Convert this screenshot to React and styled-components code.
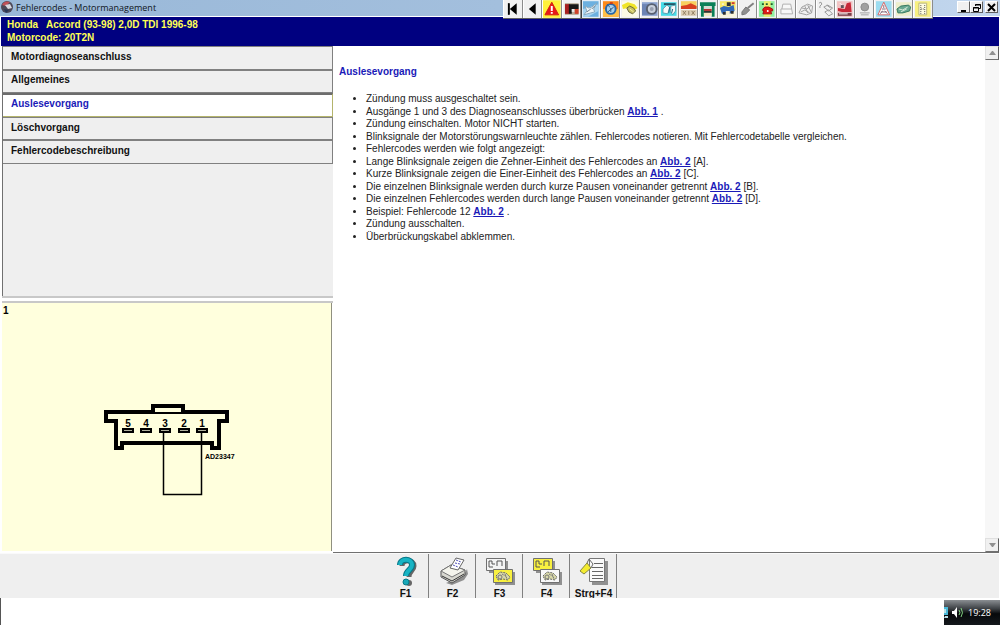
import { useState } from "react";
import styled, { createGlobalStyle } from "styled-components";

const GlobalStyle = createGlobalStyle`
	* {
		box-sizing: border-box;
	}
	body {
		margin: 0;
		background: #fff;
		font-family: "Liberation Sans", Arial, sans-serif;
		font-size: 10px;
	}
	button {
		font: inherit;
		padding: 0;
		cursor: pointer;
	}
	svg {
		display: block;
	}
`;

const Window = styled.div`
	height: 100vh;
	display: flex;
	flex-direction: column;
	background: #fff;
`;

const TitleBar = styled.header`
	height: 16px;
	display: flex;
	align-items: flex-start;
	position: relative;
	z-index: 1;
	background: linear-gradient(to right, #99b8d8, #a3bfdd 50%, #c3d7ee);
`;

const Title = styled.div`
	flex: 1;
	height: 15px;
	display: flex;
	align-items: center;
	gap: 2px;
	padding-left: 1px;
	font-family: "Open Sans", sans-serif;
	font-size: 9px;
	line-height: 15px;
	color: #10151c;
`;

const Toolbar = styled.div`
	flex: 0 0 43%;
	height: 19px;
	display: grid;
	grid-template-columns: repeat(22, 1fr);
	background: #808080;
	border-bottom: 1px solid #606060;
`;

const ToolButton = styled.button`
	min-width: 0;
	display: flex;
	align-items: center;
	justify-content: center;
	background: ${(props) => (props.$active ? "#e4eef6" : "#f1f1f1")};
	border: 0;
	border-left: 1px solid ${(props) => (props.$active ? "#404040" : "#fff")};
	border-right: 1px solid #8c8c8c;
`;

const WindowButtons = styled.div`
	flex: 0 0 67px;
	display: flex;
	justify-content: flex-end;
	padding: 1px 2px 0 0;
`;

const WindowButton = styled.button`
	width: 13px;
	height: 12px;
	margin-left: ${(props) => (props.$gap ? 2 : 0)}px;
	display: flex;
	align-items: center;
	justify-content: center;
	background: #f0f0f0;
	border: 1px solid #fff;
	border-right-color: #606060;
	border-bottom-color: #606060;
`;

const CarInfo = styled.div`
	height: 29px;
	margin: 1px 1px 0;
	padding: 1px 6px;
	background: #000080;
	color: #ffff55;
	font-weight: bold;
	line-height: 13px;
	white-space: pre;
`;

const Body = styled.main`
	flex: 1;
	min-height: 0;
	display: flex;
`;

const Side = styled.div`
	flex: 0 0 333px;
	display: flex;
	flex-direction: column;
`;

const Nav = styled.nav`
	flex: 1 1 6px;
	margin-left: 2px;
	background: #efefef;
	border-left: 1px solid #707070;
`;

const NavList = styled.div`
	height: 118px;
	display: grid;
	grid-template-rows: repeat(5, 1fr);
`;

const NavItem = styled.button`
	padding: 0 8px 2px;
	text-align: left;
	font-weight: bold;
	line-height: 16px;
	color: ${(props) => (props.$active ? "#1a1ab8" : "#111")};
	background: ${(props) => (props.$active ? "#fff" : "#efefef")};
	border: 1px solid #808080;
	border-left-width: 0;
	border-top-width: ${(props) => (props.$active ? 2 : 1)}px;
	${(props) => props.$active && "border-color: #6c6c6c #b4b46c #b4b46c;"}
`;

const Splitter = styled.div`
	height: 7px;
	margin-left: 2px;
	border: solid #c8c8c8;
	border-width: 2px 0;
	background: #fff;
`;

const Figure = styled.figure`
	flex: 1 1 4px;
	margin: 0 1px 2px 2px;
	padding: 2px 1px;
	background: #ffffdd;
	border-right: 1px solid #909080;
`;

const FigureNumber = styled.figcaption`
	font-weight: bold;
	line-height: 12px;
`;

const Drawing = styled.div`
	display: flex;
	justify-content: center;
	padding-top: 86px;
`;

const Article = styled.article`
	flex: 1;
	padding: 20px 6px;
	border-bottom: 1px solid #707070;
	color: #222;
`;

const Heading = styled.h1`
	margin: 0 0 15px;
	font-size: 10px;
	line-height: 12px;
	color: #1a1ab8;
`;

const Steps = styled.ul`
	height: 150px;
	margin: 0;
	padding-left: 27px;
	display: grid;
	grid-template-rows: repeat(12, 1fr);
	line-height: 12px;
`;

const FigLink = styled.a`
	color: #1a1ab8;
	font-weight: bold;
`;

const ScrollTrack = styled.div`
	flex: 0 0 14px;
	display: flex;
	flex-direction: column;
	justify-content: space-between;
	margin-right: 1px;
	background: #f7f7f7;
	border-bottom: 1px solid #707070;
`;

const ScrollButton = styled.button`
	height: 14px;
	display: flex;
	align-items: center;
	justify-content: center;
	background: #f0f0f0;
	border: 1px solid #e0e0e0;
	border-right-color: #606060;
	border-bottom-color: #707070;
`;

const Footer = styled.footer`
	height: 45px;
	display: flex;
	justify-content: center;
	margin-right: 1px;
	overflow: hidden;
	background: #efefef;
	border-top: 1px solid #fafafa;
`;

const KeyButton = styled.button`
	width: 47px;
	height: 50px;
	display: flex;
	flex-direction: column;
	align-items: center;
	gap: 2px;
	padding: 2px 0 0 1px;
	background: #efefef;
	border: 0;
	border-right: 1px solid #808080;
	font-weight: bold;
	line-height: 12px;
	color: #111;
`;

const Desktop = styled.div`
	height: 27px;
	display: flex;
	justify-content: flex-end;
	align-items: flex-end;
	border-left: 1px solid #555;
`;

const Tray = styled.div`
	width: 56px;
	height: 25px;
	display: flex;
	align-items: center;
	gap: 4px;
	background: linear-gradient(#8a8e92, #3c4044 35%, #07090b 55%, #14181c);
	color: #fff;
	font-family: "Open Sans", sans-serif;
	font-size: 9px;
`;

const TOOLS = [
	{
		name: "Anfang",
		icon: (
			<>
				<path d="M4 3h2v12H4z" />
				<path d="M13 3v12L6 9z" />
			</>
		),
	},
	{ name: "Zurück", icon: <path d="M12 3v12L5 9z" /> },
	{
		name: "Warnung",
		icon: (
			<>
				<path fill="#fff03a" d="M0 0h18v18H0z" />
				<path fill="#e81818" stroke="#d02010" d="M9 2l7 13H2z" />
				<path fill="#fff" d="M8 6h2v5H8zM8 12h2v2H8z" />
			</>
		),
	},
	{
		name: "Fahrzeug",
		icon: (
			<>
				<path fill="#b8ac98" d="M2 3h14v12H2z" />
				<path fill="#a82020" d="M2 4h5v10H2z" />
				<path fill="#161616" d="M6 4h10v5H9v5H6z" />
				<path fill="#e8e8e8" d="M9 9h3v3H9z" />
				<path fill="#d04028" d="M12 9h4v5h-4z" />
			</>
		),
	},
	{
		name: "Motormanagement",
		icon: (
			<>
				<path fill="#6cb0e0" d="M1 1h16v16H1z" />
				<path fill="#a8d4f0" d="M1 9l16-5v7L6 17H1z" />
				<path fill="#eef4f8" stroke="#88a8bc" d="M3 6l4 2 3-1 5-4-3 6 1 3-4 1-7 2 3-4z" />
				<path fill="none" stroke="#6c8494" d="M5 12l4-3M10 9l3-3" />
			</>
		),
	},
	{
		name: "Zahnriemen",
		icon: (
			<>
				<path fill="#ff8a18" d="M1 1h16v16H1z" />
				<path fill="#ffc048" d="M1 9h16v8H1z" />
				<circle cx="9" cy="9" r="5" fill="#a8d0ec" stroke="#2868a8" strokeWidth="2" />
				<path fill="none" stroke="#30587c" d="M5 4l3 3M6 12l6-5M9 8v4" />
				<path fill="#c83c18" d="M8 2h3v2H8z" />
			</>
		),
	},
	{
		name: "Wartung",
		icon: (
			<>
				<path fill="#fdfbe4" d="M1 1h16v16H1z" />
				<path fill="#f0e428" d="M1 5l6-3 7 2 3 4-3 2-7-2-5 1z" />
				<path fill="#c8c060" stroke="#68683c" d="M6 8l3-2 4 2 2 3-3 3-4-2z" />
				<path fill="none" stroke="#f8f4a0" d="M9 9l4 3" />
			</>
		),
	},
	{
		name: "Reifen",
		icon: (
			<>
				<path fill="#8ca4d0" d="M1 2h16v14H1z" />
				<path fill="#6c84b4" d="M1 4h7v11H1z" />
				<circle cx="11" cy="9" r="5" fill="#c8d0dc" stroke="#586070" strokeWidth="2" />
				<circle cx="11" cy="9" r="2" fill="#98a0b0" />
			</>
		),
	},
	{
		name: "Kühlung",
		icon: (
			<>
				<path fill="#48dce8" d="M1 2h16v14H1z" />
				<path fill="#205868" d="M4 3h12v2H4z" />
				<path fill="#f8f8f8" stroke="#58a0b0" d="M3 9l4-4 3 2-2 7-5-1zM11 6l5-1v6l-3 4-2-3z" />
				<path fill="none" stroke="#206880" d="M10 7l-1 6M13 9l-1 4" />
			</>
		),
	},
	{
		name: "Karosserie",
		icon: (
			<>
				<path fill="#f8d060" d="M1 1h16v7H1z" />
				<path fill="#d84020" d="M1 6l6-1 4-2 6 3v3H1z" />
				<path fill="#dccdb4" d="M1 10h16v6H1z" />
				<path fill="none" stroke="#907c60" d="M3 11l3 4M6 11l-3 4M9 11v4M12 11l3 4M15 11l-3 4" />
			</>
		),
	},
	{
		name: "Hebebühne",
		icon: (
			<>
				<path fill="#0c8058" d="M1 2h16v4H1zM2 6h3v11H2zM13 6h3v11h-3z" />
				<path fill="#d4dcd4" d="M5 6h8v3H5z" />
				<path fill="#b83030" d="M5 9h8v2H5z" />
				<path fill="#303830" d="M5 11h8v2H5z" />
				<path fill="#f4e8c0" d="M5 13h8v3H5z" />
			</>
		),
	},
	{
		name: "Werkstatt",
		icon: (
			<>
				<path fill="#f8e868" d="M1 1h16v9H1z" />
				<path fill="#fbf6dc" d="M1 10h16v7H1z" />
				<path fill="#3068b8" d="M1 8l4-2 5 1 5-2 1 6-5 3H3z" />
				<path fill="#303030" d="M8 2h4v4H8zM4 12h3v3H4zM12 11h3v3h-3z" />
				<path fill="#f8f0d0" d="M7 11h4v4H7zM3 3h2v2H3z" />
				<path fill="#d03830" d="M13 2h3v2h-3z" />
			</>
		),
	},
	{
		name: "Schlüssel",
		icon: (
			<>
				<path fill="none" stroke="#808080" strokeWidth="2" d="M9 8l6-5" />
				<path fill="#909090" stroke="#747474" d="M3 12l4-5 4 3-4 4-4 1z" />
			</>
		),
	},
	{
		name: "Telefon",
		icon: (
			<>
				<path fill="#90f0a0" d="M1 1h16v16H1z" />
				<path fill="#f0f070" d="M6 1h7v16H6z" />
				<path fill="#205828" d="M4 3h2v2H4zM8 3h2v2H8zM13 3h2v2h-2z" />
				<path fill="#e01818" stroke="#a01010" d="M5 9l2-2h4l4 2v2h-2l1 3H5l1-3H5z" />
				<circle cx="10" cy="11" r="1" fill="#fff" />
			</>
		),
	},
	{
		name: "Batterie",
		icon: <path fill="#f8f8f8" stroke="#b0b0b0" d="M5 4h8l1 5 1 5H3V9l1 0zM4 9h10" />,
	},
	{
		name: "Achsvermessung",
		icon: (
			<path
				fill="none"
				stroke="#a0a0a0"
				d="M2 13l3-6 6-3 5 2-1 7-5 2zM5 8l5 1 4-3M4 12l4-2 5 3M8 6l3 7M11 5l4 8"
			/>
		),
	},
	{
		name: "Fehlersuche",
		icon: (
			<path
				fill="none"
				stroke="#989898"
				d="M2 3l2-1 1 2-2 2v2M7 7l4-2 5 3-4 3zM8 12l4-2 4 4-4 2zM10 5l4 3"
			/>
		),
	},
	{
		name: "Airbag",
		icon: (
			<>
				<path fill="#f0c4c4" d="M1 1h16v16H1z" />
				<path fill="#c82838" d="M11 3l4-1 1 10H6l-4-1V8l7 1z" />
				<path fill="#784048" d="M2 13h14v3H2z" />
				<path fill="none" stroke="#fff" d="M4 3l4 4M3 14h9" />
				<path fill="#605058" d="M5 5h3v3H5z" />
			</>
		),
	},
	{
		name: "Kupplung",
		icon: (
			<>
				<circle cx="9" cy="7" r="4" fill="#a0a0a0" stroke="#8c8c8c" />
				<path fill="none" stroke="#a0a0a0" d="M4 13h10M5 15h8" />
			</>
		),
	},
	{
		name: "Bremsen",
		icon: (
			<>
				<path fill="#9cdcf0" d="M1 1h16v16H1z" />
				<path fill="#fff" stroke="#d86868" d="M9 2l6 13H3z" />
				<path fill="none" stroke="#806878" d="M9 5v3M7 9h4M6 12h6M8 11l-3 3M10 11l3 3" />
			</>
		),
	},
	{
		name: "Elektrik",
		icon: (
			<>
				<path fill="#eeeecc" d="M1 2h16v14H1z" />
				<path fill="#68a890" stroke="#387860" d="M2 9l4-3 8-1 2 2-1 4-7 2H3z" />
				<path fill="none" stroke="#d8ead8" d="M4 9l4 1 5-3M6 12l6-3" />
			</>
		),
	},
	{
		name: "Schaltplan",
		icon: (
			<>
				<path fill="#f8f080" d="M1 1h16v16H1z" />
				<path fill="#fffde0" stroke="#b8b480" d="M5 3h8v12H5z" />
				<path fill="none" stroke="#505050" strokeDasharray="1 1" d="M7 5v9M11 5v9M7 9h4" />
			</>
		),
	},
];

const SECTIONS = [
	"Motordiagnoseanschluss",
	"Allgemeines",
	"Auslesevorgang",
	"Löschvorgang",
	"Fehlercodebeschreibung",
];

const STEPS = [
	["Zündung muss ausgeschaltet sein."],
	["Ausgänge 1 und 3 des Diagnoseanschlusses überbrücken ", "Abb. 1", " ."],
	["Zündung einschalten. Motor NICHT starten."],
	[
		"Blinksignale der Motorstörungswarnleuchte zählen. Fehlercodes notieren. Mit Fehlercodetabelle vergleichen.",
	],
	["Fehlercodes werden wie folgt angezeigt:"],
	["Lange Blinksignale zeigen die Zehner-Einheit des Fehlercodes an ", "Abb. 2", " [A]."],
	["Kurze Blinksignale zeigen die Einer-Einheit des Fehlercodes an ", "Abb. 2", " [C]."],
	["Die einzelnen Blinksignale werden durch kurze Pausen voneinander getrennt ", "Abb. 2", " [B]."],
	["Die einzelnen Fehlercodes werden durch lange Pausen voneinander getrennt ", "Abb. 2", " [D]."],
	["Beispiel: Fehlercode 12 ", "Abb. 2", " ."],
	["Zündung ausschalten."],
	["Überbrückungskabel abklemmen."],
];

// two overlapping cards, used for F3 and F4
const Cards = ({ back, front }) => (
	<>
		<path fill="#909090" d="M4 5h19v12H4zM10 16h20v13H10z" />
		<path fill={back} stroke="#707070" d="M1.5 2.5h19v12h-19z" />
		<path fill="none" stroke="#555" d="M4 11V5h3v3h3M12 10V5h5v5M4 11h4" />
		<path fill={front} stroke="#707070" d="M8.5 13.5h19v13h-19z" />
		<path
			fill="#d8d8a8"
			stroke="#666"
			strokeDasharray="2 1"
			d="M11 20l4-4 6 1 4 4-2 3-5-1-5 1z"
		/>
		<circle cx="15" cy="21" r="2" fill="none" stroke="#777" />
		<path fill="none" stroke="#777" strokeDasharray="2 1" d="M17 18l5 3M20 18l2 5" />
	</>
);

const KEYS = [
	{
		label: "F1",
		icon: (
			<>
				<path fill="none" stroke="#666" strokeWidth="5" d="M11 10c0-7 12-7 12 0 0 5-5 5-5 11" />
				<circle cx="18" cy="27" r="3" fill="#666" />
				<path fill="none" stroke="#087888" strokeWidth="6" d="M9 9c0-7 12-7 12 0 0 5-6 5-6 11" />
				<path fill="none" stroke="#18b4c4" strokeWidth="4" d="M9 9c0-7 12-7 12 0 0 5-6 5-6 11" />
				<circle cx="15" cy="26" r="3" fill="#18a8b8" stroke="#087888" />
			</>
		),
	},
	{
		label: "F2",
		icon: (
			<>
				<path fill="#909090" d="M8 27l18-8 3-6 1 5-4 6-12 5z" />
				<path fill="#d8d8d0" stroke="#555" d="M3 15l10-6 14 5v5l-13 8-11-6z" />
				<path fill="#f4f4ec" stroke="#777" d="M3 15l10-6 14 5-13 7z" />
				<path fill="#fff" stroke="#666" d="M12 12l6-10 8 2-6 10z" />
				<path
					fill="none"
					stroke="#5050b8"
					strokeDasharray="2 1"
					d="M18 4l5 2M17 7l5 1M15 9l5 2"
				/>
				<path fill="none" stroke="#333" d="M4 20l10 5 12-7" />
			</>
		),
	},
	{ label: "F3", icon: <Cards back="#f4f4f4" front="#f8f040" /> },
	{ label: "F4", icon: <Cards back="#f8f040" front="#f8f8f8" /> },
	{
		label: "Strg+F4",
		icon: (
			<>
				<path fill="#909090" d="M13 5h16v24H13z" />
				<path fill="#fafafa" stroke="#777" d="M10.5 2.5h15v23h-15z" />
				<path stroke="#666" d="M15 7.5h9M13 11.5h11M13 15.5h11M13 19.5h11M13 22.5h11" />
				<path fill="#f4ec30" stroke="#888840" d="M1 15l7-8 4 5-7 6z" />
				<path fill="none" stroke="#666" d="M8 7l2-4 4 5-2 4" />
			</>
		),
	},
];

const Connector = () => (
	<svg width="140" height="94" viewBox="0 0 140 94" role="img" aria-label="Motordiagnoseanschluss">
		<path
			d="M9 9H130V18H122V45H115V40H25V45H19V18H9Z"
			fill="none"
			stroke="#000"
			strokeWidth="4"
		/>
		<path d="M56 9V3H86V9" fill="#ffffdd" stroke="#000" strokeWidth="4" />
		{[31, 49, 68, 87, 105].map((x, i) => (
			<g key={x}>
				<rect x={x - 6} y="25" width="12" height="5" />
				<path d={`M${x - 4} 27.5h8`} stroke="#b0b09c" />
				<text x={x} y="24" textAnchor="middle" fontSize="10" fontWeight="bold">
					{5 - i}
				</text>
			</g>
		))}
		<path d="M66.5 29V91.5H104.5V29" fill="none" stroke="#000" strokeWidth="1.5" />
		<text x="108" y="56" fontSize="7" fontWeight="bold">
			AD23347
		</text>
	</svg>
);

function App() {
	const [section, setSection] = useState("Auslesevorgang");

	return (
		<Window>
			<GlobalStyle />
			<TitleBar>
				<Title>
					<svg width="13" height="13" viewBox="0 0 13 13">
						<circle cx="6" cy="6" r="6" fill="#4c4858" />
						<path fill="#c05058" d="M1 4a6 6 0 0 1 8-3L5 5z" />
						<path fill="#d8d8e0" d="M4 4l5-1 2 4-4 1z" />
						<path fill="#283858" d="M3 8l5 1-3 3z" />
					</svg>
					Fehlercodes - Motormanagement
				</Title>
				<Toolbar>
					{TOOLS.map((tool) => (
						<ToolButton
							key={tool.name}
							aria-label={tool.name}
							$active={tool.name === "Motormanagement"}
						>
							<svg width="18" height="18" viewBox="0 0 18 18">
								{tool.icon}
							</svg>
						</ToolButton>
					))}
				</Toolbar>
				<WindowButtons>
					<WindowButton aria-label="Minimieren">
						<svg width="9" height="9" viewBox="0 0 9 9">
							<path d="M2 7h5v2H2z" />
						</svg>
					</WindowButton>
					<WindowButton aria-label="Wiederherstellen">
						<svg width="9" height="9" viewBox="0 0 9 9">
							<path
								fill="none"
								stroke="#000"
								d="M3.5 3V1.5h5v4H7M3 2h6M1.5 4.5h5v4h-5zM1 5h6"
							/>
						</svg>
					</WindowButton>
					<WindowButton $gap aria-label="Schließen">
						<svg width="9" height="9" viewBox="0 0 9 9">
							<path stroke="#000" strokeWidth="2" d="M1 1l7 7M8 1L1 8" />
						</svg>
					</WindowButton>
				</WindowButtons>
			</TitleBar>
			<CarInfo>
				<div>Honda   Accord (93-98) 2,0D TDI 1996-98</div>
				<div>Motorcode: 20T2N</div>
			</CarInfo>
			<Body>
				<Side>
					<Nav>
						<NavList>
							{SECTIONS.map((name) => (
								<NavItem key={name} $active={name === section} onClick={() => setSection(name)}>
									{name}
								</NavItem>
							))}
						</NavList>
					</Nav>
					<Splitter />
					<Figure>
						<FigureNumber>1</FigureNumber>
						<Drawing>
							<Connector />
						</Drawing>
					</Figure>
				</Side>
				<Article>
					<Heading>{section}</Heading>
					<Steps>
						{STEPS.map(([text, link, rest]) => (
							<li key={text}>
								{text}
								{link && <FigLink href="#abb">{link}</FigLink>}
								{rest}
							</li>
						))}
					</Steps>
				</Article>
				<ScrollTrack>
					<ScrollButton aria-label="Nach oben">
						<svg width="7" height="4" viewBox="0 0 7 4">
							<path fill="#909090" d="M0 4l3-4h1l3 4z" />
						</svg>
					</ScrollButton>
					<ScrollButton aria-label="Nach unten">
						<svg width="7" height="4" viewBox="0 0 7 4">
							<path fill="#909090" d="M0 0h7L4 4H3z" />
						</svg>
					</ScrollButton>
				</ScrollTrack>
			</Body>
			<Footer>
				{KEYS.map((key) => (
					<KeyButton key={key.label}>
						<svg width="30" height="30" viewBox="0 0 30 30">
							{key.icon}
						</svg>
						{key.label}
					</KeyButton>
				))}
			</Footer>
			<Desktop>
				<Tray>
					<svg width="20" height="13" viewBox="0 0 20 13">
						<path fill="#48b8d8" d="M0 1h4v8H0z" />
						<path fill="#b8e0e8" d="M0 3h2v4H0zM1 10h3v2H0z" />
						<path fill="#fff" d="M8 5h2l3-4v11l-3-4H8z" />
						<path fill="none" stroke="#80d080" d="M15 4q2 3 0 5M17 2q3 5 0 9" />
					</svg>
					<span>19:28</span>
				</Tray>
			</Desktop>
		</Window>
	);
}

export default App;
